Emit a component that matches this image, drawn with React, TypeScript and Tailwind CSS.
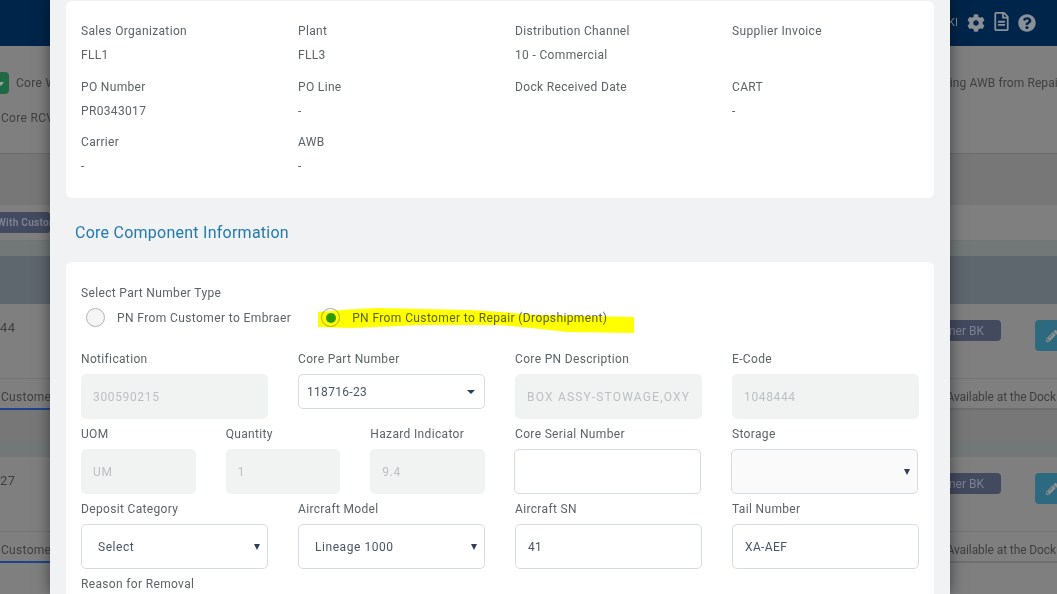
import type { ReactNode } from 'react'
import { FaCog, FaRegFileAlt, FaQuestionCircle, FaPencilAlt } from 'react-icons/fa'

const labelClass = 'text-[12px] leading-[14px] tracking-[0.34px] text-[#5c6368]'
const fieldClass = 'h-[45px] w-full rounded-[5px] text-[12px] outline-none'

function Info({ label, value }: { label: string; value?: string }) {
  return (
    <div className="flex h-[55.5px] flex-col gap-[10px]">
      <span className={labelClass}>{label}</span>
      {value ? <span className={labelClass}>{value}</span> : null}
    </div>
  )
}

function Field({ label, children }: { label: string; children: ReactNode }) {
  return (
    <label className="flex min-w-0 flex-col gap-[8px]">
      <span className={labelClass}>{label}</span>
      {children}
    </label>
  )
}

function Disabled({ value, tracking = 'tracking-[0.65px]' }: { value: string; tracking?: string }) {
  return <input disabled value={value} className={`${fieldClass} overflow-hidden bg-[#f1f3f3] pl-[12px] pr-[13px] text-[#bcc0c2] ${tracking}`} />
}

function TextBox({ value = '', className = '' }: { value?: string; className?: string }) {
  return <input readOnly value={value} className={`${fieldClass} border border-[#d6dbe8] bg-white pl-[12px] tracking-[0.38px] text-[#4a5468] ${className}`} />
}

function Select({ value, className = 'h-[45px]', pad = 'pl-[16px]', caret = 'right-[7px] h-[6px] w-[6px]', tracking = 'tracking-[0.55px]' }: { value: string; className?: string; pad?: string; caret?: string; tracking?: string }) {
  return (
    <div className={`relative flex w-full items-center rounded-[5px] border border-[#d6dbe8] ${className} ${pad}`}>
      <span className={`text-[12px] text-[#4a5468] ${tracking}`}>{value}</span>
      <svg viewBox="0 0 8 6" preserveAspectRatio="none" className={`absolute top-1/2 -translate-y-1/2 fill-[#2f3d57] ${caret}`}>
        <path d="M0 0h8L4 6z" />
      </svg>
    </div>
  )
}

function Radio({ on = false }: { on?: boolean }) {
  return (
    <span className={`flex h-[19px] w-[19px] shrink-0 items-center justify-center rounded-full border ${on ? 'border-[#a9aca0]' : 'border-[#b4b4b4] bg-[#f5f5f5]'}`}>
      {on ? <span className="h-[10px] w-[10px] rounded-full bg-[#2e9a0e]" /> : null}
    </span>
  )
}

function Row({ id }: { id: string }) {
  return (
    <>
      <div className="flex h-[74px] items-start justify-between pt-[16px]">
        <span className="pt-[1px] text-[13px] leading-[14px] tracking-[0.5px]">{id}</span>
        <div className="flex items-start gap-[34px]">
          <span className="flex h-[21px] w-[51px] items-center justify-end rounded-r-[4px] bg-[#434a60] pr-[17px] text-[12px] whitespace-nowrap text-[#7d8290]">ner BK</span>
          <span className="flex h-[31px] w-[22px] items-center overflow-hidden rounded-l-[4px] bg-[#2d6a7f] pl-[11px] text-[#8f8f8f]">
            <FaPencilAlt className="h-[12px] w-[12px] shrink-0" />
          </span>
        </div>
      </div>
      <div className="flex h-[32px] items-stretch justify-between border-t border-[#747474] whitespace-nowrap">
        <span className="w-[50px] border-b-2 border-[#1f4390] pl-[1px] pt-[9px] tracking-[0.3px]">Customer</span>
        <span className="border-b-2 border-[#6f6f6f] pr-[1px] pt-[9px] tracking-[-0.1px]">Available at the Dock</span>
      </div>
    </>
  )
}

function Backdrop() {
  return (
    <div className="flex h-[594px] flex-col bg-[#7f7f7f] text-[12px] text-[#3f3f3f]">
      <header className="flex h-[46px] items-center justify-end gap-[8px] bg-[#00254a] pr-[21px] text-[#8b9097]">
        <span className="mr-[1px] text-[11px]">KI</span>
        <FaCog className="mr-[1px] h-[18px] w-[18px]" />
        <FaRegFileAlt className="mr-[1px] mb-[3px] h-[19px] w-[15px]" />
        <FaQuestionCircle className="h-[18px] w-[18px]" />
      </header>
      <div className="flex h-[108px] flex-col border-b border-[#6b6b6b] pt-[26px]">
        <div className="flex h-[22px] items-center justify-between">
          <div className="flex items-center gap-[7px]">
            <span className="flex h-[22px] w-[9px] items-center overflow-hidden rounded-r-[4px] bg-[#1f6a45]">
              <svg viewBox="0 0 4 6" className="h-[6px] w-[4px] fill-[#8fa89a]"><path d="M0 2h4L1 6 0 5z" /></svg>
            </span>
            <span className="tracking-[0.3px]">Core W</span>
          </div>
          <span className="mr-[-5px] whitespace-nowrap tracking-[0.1px]">ding AWB from Repair</span>
        </div>
        <span className="mt-[15px] pl-[1px] tracking-[0.3px]">Core RCV</span>
      </div>
      <div className="h-[51px] bg-[#777777]" />
      <div className="flex h-[36px] items-center justify-start border-b border-[#6e7676]">
        <span className="flex h-[21px] w-[50px] items-center overflow-hidden whitespace-nowrap rounded-r-[3px] bg-[#434a60] text-[10px] font-bold tracking-[0.3px] text-[#7d8290]">
          <span className="ml-[-3px]">With Custom</span>
        </span>
      </div>
      <div className="h-[15px] bg-[#727878]" />
      <div className="h-[48px] bg-[#5e666e]" />
      <Row id="44" />
      <div className="h-[31px] bg-[#777777]" />
      <div className="h-[16px] bg-[#727878]" />
      <Row id="27" />
    </div>
  )
}

export default function App() {
  return (
    <div className="relative h-[594px] w-[1057px] overflow-hidden font-['Roboto',sans-serif]">
      <Backdrop />
      <div className="absolute inset-y-0 left-[50px] w-[900px] overflow-hidden bg-[#f1f2f4] shadow-[0_0_14px_rgba(0,0,0,0.5)]">
        <section className="mx-[16px] mt-[1px] h-[197px] rounded-[6px] bg-white px-[15px] pt-[23px]">
          <div className="grid grid-cols-4 gap-x-[30px]">
            <Info label="Sales Organization" value="FLL1" />
            <Info label="Plant" value="FLL3" />
            <Info label="Distribution Channel" value="10 - Commercial" />
            <Info label="Supplier Invoice" />
            <Info label="PO Number" value="PR0343017" />
            <Info label="PO Line" value="-" />
            <Info label="Dock Received Date" />
            <Info label="CART" value="-" />
            <Info label="Carrier" value="-" />
            <Info label="AWB" value="-" />
          </div>
        </section>
        <h2 className="mt-[24px] h-[40px] pt-[1px] pl-[25px] text-[16px] leading-[20px] tracking-[0.25px] text-[#2179b2]">Core Component Information</h2>
        <section className="relative mx-[16px] h-[340px] rounded-[6px] bg-white px-[15px] pt-[24px]">
          <span className={`block ${labelClass}`}>Select Part Number Type</span>
          <div className="mt-[8px] flex h-[19px] items-center text-[12px] leading-[14px] tracking-[0.39px] text-[#5c6368]">
            <span className="ml-[5px]"><Radio /></span>
            <span className="ml-[12px]">PN From Customer to Embraer</span>
            <span className="ml-[30px]"><Radio on /></span>
            <span className="ml-[12px]">PN From Customer to Repair (Dropshipment)</span>
          </div>
          <svg viewBox="0 0 320 30" className="pointer-events-none absolute left-[252px] top-[46px] h-[30px] w-[320px] fill-[#ffff00] mix-blend-multiply">
            <path d="M0 4 Q30 1 60 0 L150 2 Q190 4 216 7 L316 9 V25 L250 24 Q215 20 182 17 L100 17 Q60 19 32 20 L0 19 Z" />
          </svg>
          <div className="mt-[25px] grid grid-cols-4 gap-x-[30px] gap-y-[8px]">
            <Field label="Notification"><Disabled value="300590215" /></Field>
            <Field label="Core Part Number"><Select value="118716-23" className="h-[35px]" pad="pl-[8px]" caret="right-[9px] h-[4px] w-[8px]" tracking="tracking-[0.3px]" /></Field>
            <Field label="Core PN Description"><Disabled value="BOX ASSY-STOWAGE,OXYGEN" tracking="tracking-[1.2px]" /></Field>
            <Field label="E-Code"><Disabled value="1048444" /></Field>

            <div className="col-span-2 grid grid-cols-3 gap-x-[30px]">
              <Field label="UOM"><Disabled value="UM" /></Field>
              <Field label="Quantity"><Disabled value="1" /></Field>
              <Field label="Hazard Indicator"><Disabled value="9.4" /></Field>
            </div>
            <Field label="Core Serial Number"><TextBox className="ml-[-1px]" /></Field>
            <Field label="Storage"><Select value="" className="ml-[-1px] h-[45px] bg-[#fafafa]" /></Field>

            <Field label="Deposit Category"><Select value="Select" /></Field>
            <Field label="Aircraft Model"><Select value="Lineage 1000" /></Field>
            <Field label="Aircraft SN"><TextBox value="41" /></Field>
            <Field label="Tail Number"><TextBox value="XA-AEF" /></Field>

            <Field label="Reason for Removal"><span /></Field>
          </div>
        </section>
      </div>
    </div>
  )
}
